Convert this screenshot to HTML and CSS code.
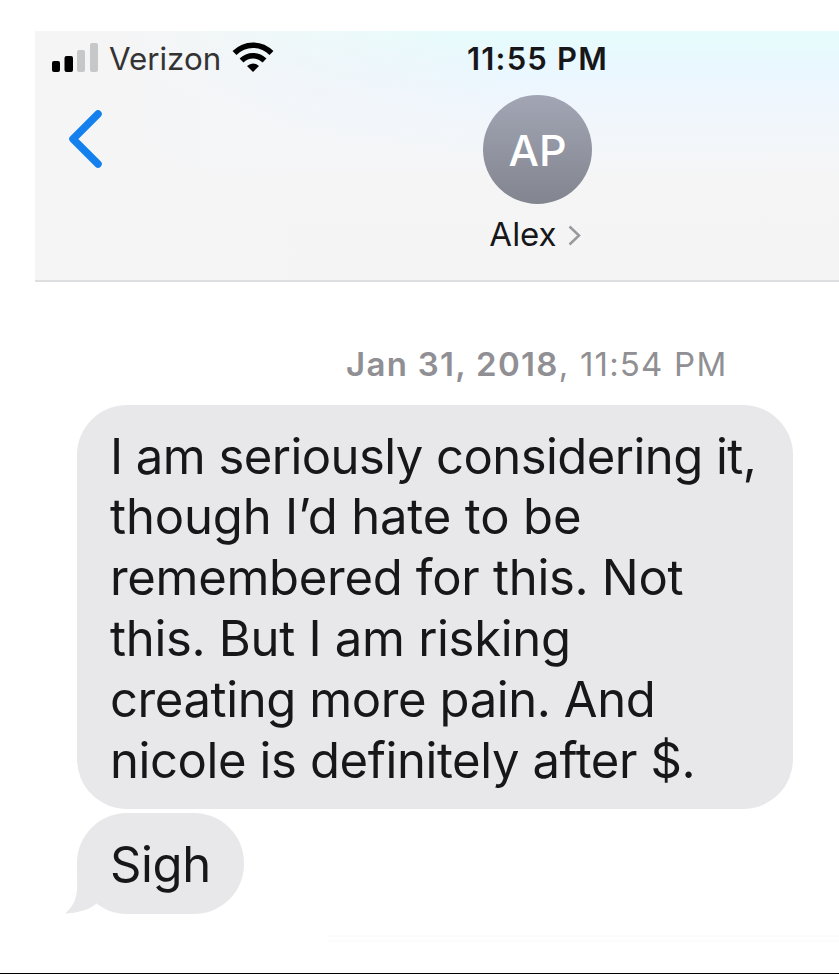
FILE: index.html
```
<!DOCTYPE html>
<html lang="en">
<head>
  <meta charset="UTF-8">
  <meta name="viewport" content="width=device-width, initial-scale=1.0">
  <title>Messages - Alex</title>
  <link rel="stylesheet" href="styles.css">
</head>
<body>
  <div class="phone">
    <header>
      <div class="left">
        <div class="status">
          <svg class="signal" width="46" height="29" viewBox="0 0 46 29">
            <rect x="0" y="18" width="8" height="11" rx="2"/>
            <rect x="12.500" y="13" width="8.500" height="16" rx="2"/>
            <rect class="off" x="25" y="7" width="8" height="22" rx="2"/>
            <rect class="off" x="38" y="0" width="8" height="29" rx="2"/>
          </svg>
          <span class="carrier">Verizon</span>
          <svg class="wifi" width="42" height="31" viewBox="0 0 42 31">
            <path d="M2.500 11C13 .5 29 .5 39.500 11"/>
            <path d="M9.500 18.500C16 12 26 12 32.500 18.500"/>
            <path class="dot" d="M15 24Q21 19 27 24L21 30Z"/>
          </svg>
        </div>
        <svg class="back" width="35" height="58" viewBox="0 0 35 58">
          <path d="M30 4L5 29L30 54"/>
        </svg>
      </div>
      <div class="contact">
        <span class="time">11:55 PM</span>
        <div class="avatar">AP</div>
        <div class="name">
          <span>Alex</span>
          <svg class="chevron" width="13" height="21" viewBox="0 0 13 21">
            <path d="M1.500 1.500L11 10.500L1.500 19.500"/>
          </svg>
        </div>
      </div>
    </header>

    <main>
      <p class="date"><b>Jan 31, 2018</b>, 11:54 PM</p>
      <div class="bubble long">
        <div>I am seriously considering it,</div>
        <div>though I’d hate to be</div>
        <div>remembered for this. Not</div>
        <div>this. But I am risking</div>
        <div>creating more pain. And</div>
        <div>nicole is definitely after $.</div>
      </div>
      <div class="bubble short">
        Sigh
        <svg class="tail" width="36" height="48" viewBox="0 0 36 48">
          <path d="M12 0C12 22 15 35 0 47.500C12 47 24 44 31 38L36 0Z"/>
        </svg>
      </div>
    </main>

    <div class="input-edge"></div>
  </div>
</body>
</html>
```
FILE: styles.css
```
* { box-sizing: border-box; }
body { margin: 0; background: #fff; font-family: Inter, "Liberation Sans", sans-serif; color: #17171a; }
svg { display: block; flex: none; }
.phone { display: flex; flex-direction: column; width: 839px; height: 974px; padding: 31px 0 0 35px; border-bottom: 1px solid #000; overflow: hidden; }

header {
  display: grid;
  grid-template-columns: 394px 217px 1fr;
  height: 251px;
  border-bottom: 2px solid #dedfe0;
  background:
    linear-gradient(90deg, #f5f5f6 12%, rgba(245, 245, 246, 0) 58%),
    linear-gradient(180deg, #e5fcfc 0%, #e9f8fe 13%, #eef6fe 25%, #f2f6fa 42%, #f5f5f6 58%, #f4f4f4 100%);
}
.left { padding: 12px 0 0 17px; }
.status { display: flex; height: 31px; }
.signal .off { fill: #c6c7c9; }
.carrier { width: 110px; margin-left: 11px; font-size: 31.300px; line-height: 32px; color: #333; }
.wifi { margin-left: 13px; margin-top: -1px; }
.wifi path { fill: none; stroke: #000; stroke-width: 5.5; }
.wifi .dot { fill: #000; stroke: none; }
.back { margin: 36px 0 0 16px; }
.back path { fill: none; stroke: #1480ee; stroke-width: 7.5; stroke-linecap: round; stroke-linejoin: round; }

.contact { display: flex; flex-direction: column; align-items: center; padding-top: 12px; }
.time { font-size: 31px; font-weight: 600; line-height: 32px; letter-spacing: 1.2px; white-space: nowrap; }
.avatar { display: flex; align-items: center; justify-content: center; width: 109px; height: 109px; margin-top: 20px; border-radius: 50%; background: linear-gradient(#a2a6b4, #82858f); color: #fff; font-size: 43px; font-weight: 500; }
.name { display: flex; align-items: center; gap: 11px; margin: 10px 5px 0 0; font-size: 33px; line-height: 40px; }
.chevron { margin-top: 2px; }
.chevron path { fill: none; stroke: #98999d; stroke-width: 2.5; }

main { display: flex; flex-direction: column; align-items: flex-start; padding-left: 42px; }
.date { align-self: stretch; margin: 62px 0 0; padding-left: 269px; font-size: 33px; line-height: 40px; letter-spacing: 1.2px; color: #909094; white-space: nowrap; }
.date b { font-weight: 600; letter-spacing: 1.3px; }
.bubble { background: #e8e8ea; border-radius: 50px; font-size: 49px; line-height: 60.900px; letter-spacing: -0.4px; white-space: nowrap; }
.long { width: 716px; height: 404px; margin-top: 21px; padding: 21.500px 0 0 33px; }
.long div:nth-child(1) { letter-spacing: -0.55px; }
.long div:nth-child(2) { letter-spacing: -0.15px; }
.long div:nth-child(3), .long div:nth-child(4) { letter-spacing: -0.3px; }
.short { position: relative; width: 167px; height: 101px; margin-top: 4px; padding: 21.500px 0 0 33px; }
.tail { position: absolute; left: -12px; bottom: 0; }
.tail path { fill: #e8e8ea; }

.input-edge { height: 7px; margin: 21px 0 0 293px; border-top: 2px solid #fcfcfc; border-bottom: 2px solid #fcfcfc; }
```
